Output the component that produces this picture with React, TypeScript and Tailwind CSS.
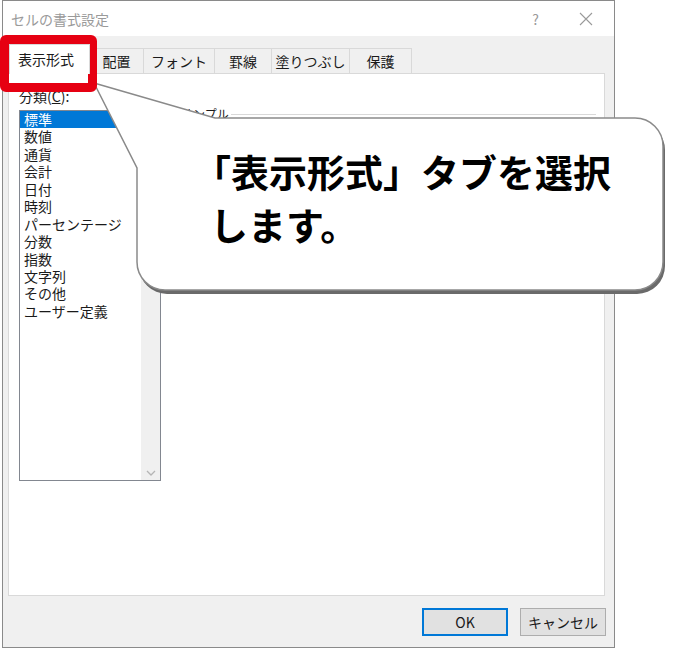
import React from 'react';

const categories = [
  '標準',
  '数値',
  '通貨',
  '会計',
  '日付',
  '時刻',
  'パーセンテージ',
  '分数',
  '指数',
  '文字列',
  'その他',
  'ユーザー定義',
];

const tabs = [
  { label: '配置', w: 'w-[54px]' },
  { label: 'フォント', w: 'w-[71px]' },
  { label: '罫線', w: 'w-[57px]' },
  { label: '塗りつぶし', w: 'w-[78px]' },
  { label: '保護', w: 'w-[62px]' },
];

const font = { fontFamily: '"Noto Sans CJK JP", "Noto Sans", sans-serif' };

const App: React.FC = () => {
  return (
    <div className="relative w-[699px] h-[649px] bg-white overflow-hidden text-[#1a1a1a]" style={font}>
      {/* dialog */}
      <div className="ml-[2px] w-[613px] h-[648px] border border-[#8a8a8a] bg-[#f0f0f0] flex flex-col">
        <div className="h-[35px] bg-white flex items-center pl-[8px] pr-[20px] shrink-0">
          <span className="text-[14px] text-[#9a9a9a] leading-none">セルの書式設定</span>
          <span className="ml-auto text-[14px] text-[#9a9a9a] leading-none mr-[40px]">?</span>
          <svg width="14" height="14" viewBox="0 0 14 14" className="mr-[1px]">
            <path d="M1 1 L13 13 M13 1 L1 13" stroke="#9a9a9a" strokeWidth="1.1" fill="none" />
          </svg>
        </div>

        {/* tabs */}
        <div className="flex items-end h-[28px] mt-[9px] pl-[6px] shrink-0">
          <div className="relative z-10 w-[81px] h-[30px] -mb-[1px] bg-white border border-b-0 border-[#d9d9d9] flex items-center pl-[8px] text-[14px]">
            表示形式
          </div>
          {tabs.map(t => (
            <div
              key={t.label}
              className={`${t.w} h-[25px] border border-l-0 border-b-0 border-[#d9d9d9] bg-[#f0f0f0] flex items-center justify-center text-[14px]`}
            >
              {t.label}
            </div>
          ))}
        </div>

        {/* panel */}
        <div className="ml-[5px] w-[597px] h-[523px] bg-white border border-[#d9d9d9] shrink-0 flex pl-[10px] pt-[14px]">
          <div className="flex flex-col">
            <div className="text-[14px] leading-[16px] h-[22px] pl-[0px]">
              分類(<span className="underline">C</span>):
            </div>
            <div className="w-[142px] h-[371px] border border-[#828790] flex">
              <div className="flex-1 flex flex-col pt-[0px]">
                {categories.map((c, i) => (
                  <div
                    key={c}
                    className={`h-[17.45px] leading-[17px] text-[14px] pl-[4px] ${
                      i === 0 ? 'bg-[#0078d7] text-white' : ''
                    }`}
                  >
                    {c}
                  </div>
                ))}
              </div>
              <div className="w-[19px] bg-[#f0f0f0] flex flex-col justify-end items-center pb-[4px]">
                <svg width="10" height="6" viewBox="0 0 10 6">
                  <path d="M1 1 L5 5 L9 1" stroke="#b5b5b5" strokeWidth="1.3" fill="none" />
                </svg>
              </div>
            </div>
          </div>
          <div className="flex-1 ml-[20px] pr-[8px]">
            <div className="flex items-center h-[20px] mt-[16px]">
              <span className="text-[12px]">サンプル</span>
              <div className="flex-1 border-t border-[#d9d9d9] ml-[2px]" />
            </div>
          </div>
        </div>

        {/* buttons */}
        <div className="flex justify-end gap-[12px] mt-[12px] pr-[8px]">
          <button className="w-[86px] h-[28px] bg-[#e1e1e1] border-2 border-[#0078d7] text-[14px]">OK</button>
          <button className="w-[86px] h-[28px] bg-[#e1e1e1] border border-[#adadad] text-[14px]">キャンセル</button>
        </div>
      </div>

      {/* callout bubble */}
      <svg className="absolute left-0 top-0 pointer-events-none" width="699" height="649" viewBox="0 0 699 649">
        <path
          d="M94 83 L215 118 L635 118 A28 28 0 0 1 663 146 L663 262 A28 28 0 0 1 635 290 L165 290 A28 28 0 0 1 137 262 L137 168 Z"
          fill="#6a6a6a"
          transform="translate(2 4)"
        />
        <path
          d="M94 83 L215 118 L635 118 A28 28 0 0 1 663 146 L663 262 A28 28 0 0 1 635 290 L165 290 A28 28 0 0 1 137 262 L137 168 Z"
          fill="#ffffff"
          stroke="#8a8a8a"
          strokeWidth="1.5"
        />
      </svg>
      <div className="absolute left-[193px] top-[144px] text-[38px] font-bold leading-[53px] text-black">
        <div>「表示形式」タブを選択</div>
        <div className="pl-[17px]">します。</div>
      </div>

      {/* highlight on the tab */}
      <div className="absolute left-0 top-[35px] w-[97px] h-[57px] border-[9px] border-[#e60012] rounded-[6px]" />
    </div>
  );
};

export default App;
